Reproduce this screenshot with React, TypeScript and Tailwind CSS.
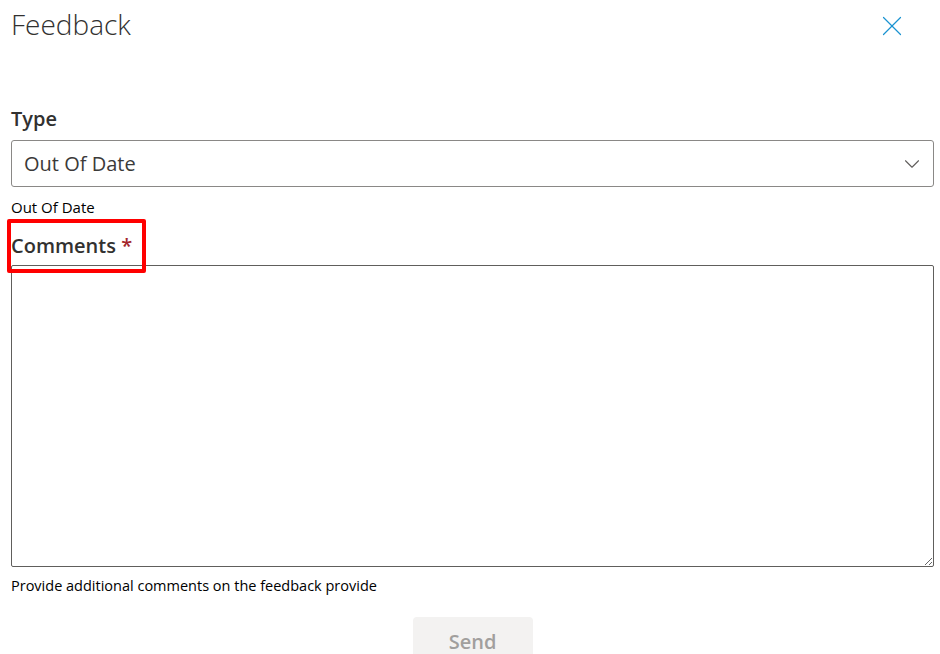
import { ChevronDown, X } from 'lucide-react'

export default function App() {
  return (
    <div className="min-h-screen bg-white pl-[11px] pr-[6px] text-[#323130]" style={{ fontFamily: '"Open Sans", "Noto Sans", sans-serif' }}>
      <div className="flex h-[51px] items-start justify-between">
        <h1 className="text-[28px] font-light leading-[48px] text-[#323130]">Feedback</h1>
        <button className="mr-[25px] mt-[9px] text-[#1a93d1]">
          <X size={34} strokeWidth={0.85} />
        </button>
      </div>

      <label className="mt-[54px] block text-[20px] font-semibold leading-[28px]">Type</label>
      <div className="mt-[7px] flex h-[47px] items-center justify-between rounded-[3px] border border-[#8a8886] pl-[12px] pr-[8px]">
        <span className="text-[20px] text-[#3b3a39]">Out Of Date</span>
        <ChevronDown size={26} strokeWidth={1} className="text-[#605e5c]" />
      </div>
      <p className="mt-[10px] text-[15px] leading-[20px] text-black">Out Of Date</p>

      <div className="relative mt-[15px]">
        <label className="block text-[20px] font-semibold leading-[28px]">
          Comments <span className="text-[#a4262c]">*</span>
        </label>
        <div className="absolute left-[-4px] top-[-13px] h-[54px] w-[139px] rounded-[2px] border-[4px] border-[#ff0000]" />
      </div>
      <textarea className="mt-[5px] block h-[302px] w-full resize-y rounded-[2px] border border-[#605e5c] outline-none" />
      <p className="mt-[9px] text-[14.5px] leading-[20px] text-black">Provide additional comments on the feedback provide</p>

      <div className="mt-[21px] flex justify-center">
        <button className="h-[50px] w-[120px] rounded-[4px] bg-[#f3f2f1] text-[20px] font-semibold text-[#a19f9d]">Send</button>
      </div>
    </div>
  )
}
